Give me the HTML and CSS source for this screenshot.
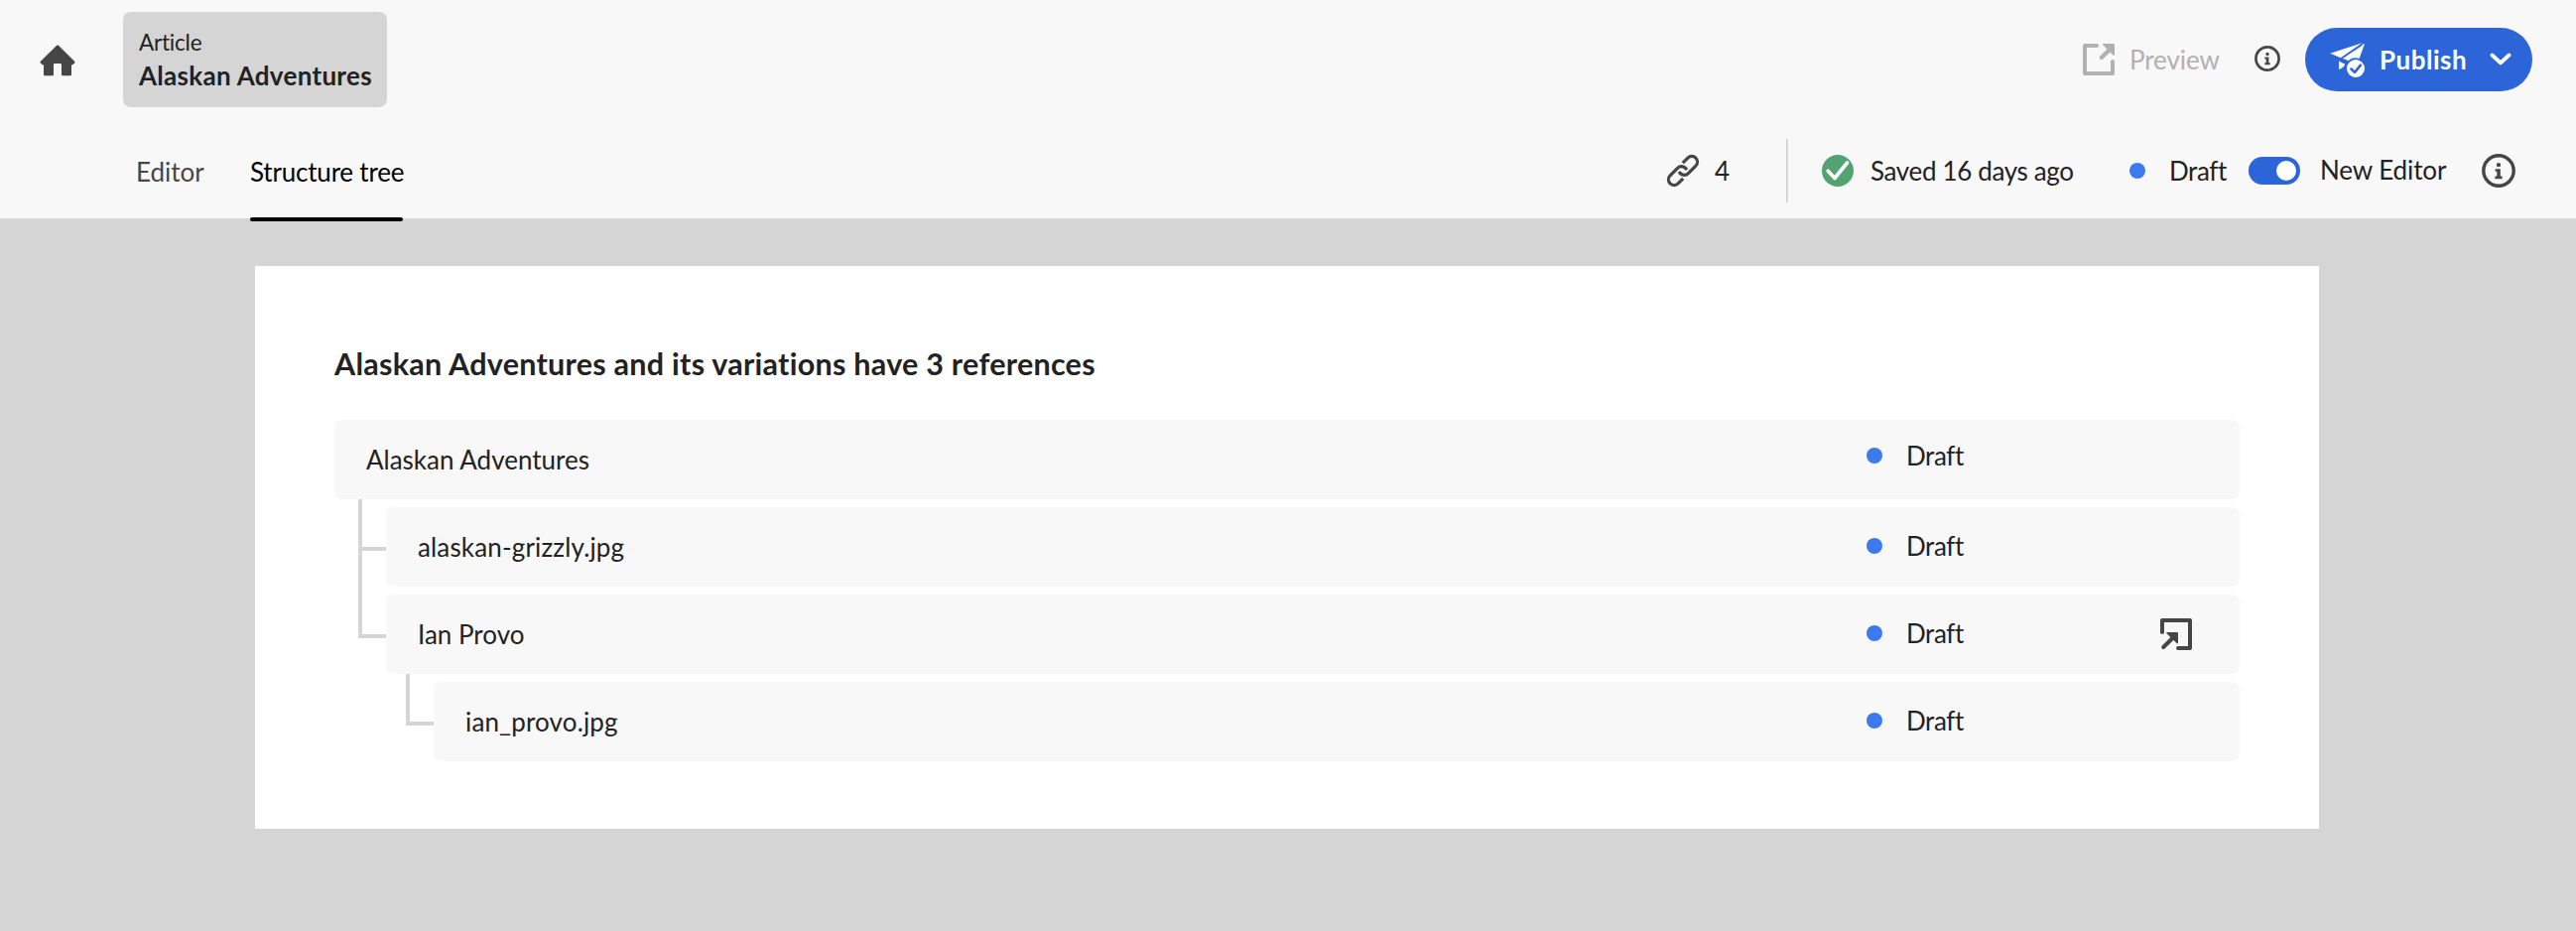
FILE: index.html
```html
<!DOCTYPE html>
<html lang="en">
<head>
<meta charset="utf-8">
<title>Alaskan Adventures</title>
<link rel="stylesheet" href="styles.css">
</head>
<body>
<svg class="defs" aria-hidden="true">
  <symbol id="info" viewBox="0 0 34 34">
    <circle cx="17" cy="17" r="15.2" fill="none" stroke="currentColor" stroke-width="3.4"/>
    <circle cx="17" cy="11.1" r="2.2" fill="currentColor"/>
    <path d="M13.6 15.2h5.2v7.4h1.8v2.6h-7.2v-2.6h1.9v-4.8h-1.7z" fill="currentColor"/>
  </symbol>
</svg>
<header class="header">
  <div class="topbar">
    <svg class="icon home" viewBox="0 0 36 36"><path fill="currentColor" d="M17.2 2.8a1.2 1.2 0 0 1 1.7 0L35.3 19c.6.6.4 1-.3 1.6l-1.1 1.2c-.5.5-1.1.8-1.9.8V32a1.2 1.2 0 0 1-1.2 1.2h-7.6A1.2 1.2 0 0 1 22 32V22.2a1.2 1.2 0 0 0-1.2-1.2h-5.6a1.2 1.2 0 0 0-1.2 1.2V32a1.2 1.2 0 0 1-1.2 1.2H5.2A1.2 1.2 0 0 1 4 32v-9.4c-.8 0-1.4-.3-1.9-.8L1 20.600C.3 20 .1 19.600.7 19z"/></svg>
    <div class="article">
      <span class="article-type">Article</span>
      <span class="article-name">Alaskan Adventures</span>
    </div>
    <div class="actions">
      <svg class="icon preview-icon" viewBox="0 0 36 36"><path d="M16 4H4v28h28V20" fill="none" stroke="currentColor" stroke-width="4" stroke-linecap="round" stroke-linejoin="round"/><path d="M22.800 2H33a1 1 0 0 1 1 1v10.200c0 .8-.8 1-1.300.5L22.400 3.400c-.6-.6-.3-1.400.4-1.400z" fill="currentColor"/><path d="M30 7l-9.200 9" stroke="currentColor" stroke-width="4.200" stroke-linecap="round"/></svg>
      <span class="preview">Preview</span>
      <svg class="info-small"><use href="#info"/></svg>
      <button class="publish">
        <svg class="icon" viewBox="0 0 36 36"><g fill="currentColor"><path d="M.3 11.800L32.500 1.300 10.800 16.200z"/><path d="M34.900 2.500L29.600 17c-4.500-1.700-8.300-.6-11 2.300l-1.900-.9L34.100 2z"/><path d="M12.800 16.900L31.500 4.500 17.600 18.600z"/><path d="M9.100 19.500l6 3.200c-.5 1-.8 1.700-1 2.200l-3.600 2.700c-.9.600-1.400.3-1.400-.6z"/><circle cx="26" cy="27" r="9"/></g><path d="M21.400 27.400l3.500 3.500 6-7.200" fill="none" stroke="#2c65d8" stroke-width="2.600" stroke-linecap="round" stroke-linejoin="round"/></svg>
        <span class="publish-label">Publish</span>
        <svg class="chevron" viewBox="0 0 22 14"><path d="M2.600 2.600L11 10.400l8.400-7.800" fill="none" stroke="currentColor" stroke-width="4" stroke-linecap="round" stroke-linejoin="round"/></svg>
      </button>
    </div>
  </div>
  <div class="subbar">
    <nav class="tabs">
      <a class="tab">Editor</a>
      <a class="tab tab-active">Structure tree</a>
    </nav>
    <div class="info-bar">
      <svg class="icon link-icon" viewBox="0 0 36 36"><g fill="none" stroke="currentColor" stroke-width="3.200"><path d="M17.800 10.200l5.100-5.100a5.600 5.600 0 0 1 8 8l-7.500 7.500a5.600 5.600 0 0 1-9.200-1.800"/><path transform="rotate(180 18 18)" d="M17.800 10.200l5.100-5.100a5.600 5.600 0 0 1 8 8l-7.500 7.500a5.600 5.600 0 0 1-9.200-1.800"/></g></svg>
      <span class="count">4</span>
      <span class="divider"></span>
      <svg class="check" viewBox="0 0 32 32"><circle cx="16" cy="16" r="16" fill="#52a371"/><path d="M6.200 16.200l6.800 7.300L25.500 8" fill="none" stroke="#f8f8f8" stroke-width="3.800" stroke-linecap="round" stroke-linejoin="round"/></svg>
      <span class="saved">Saved 16 days ago</span>
      <span class="dot"></span>
      <span class="draft">Draft</span>
      <span class="toggle"><span class="knob"></span></span>
      <span class="new-editor">New Editor</span>
      <svg class="info-large"><use href="#info"/></svg>
    </div>
  </div>
</header>
<main class="card">
  <h1 class="title">Alaskan Adventures and its variations have 3 references</h1>
  <div class="tree">
    <div class="row row-root"><span>Alaskan Adventures</span><div class="status"><span class="dot"></span><span class="draft">Draft</span></div></div>
    <div class="branch">
      <div class="rail"><i class="elbow"></i><i class="elbow elbow-next"></i></div>
      <div class="rows">
        <div class="row"><span class="file">alaskan-grizzly.jpg</span><div class="status"><span class="dot"></span><span class="draft">Draft</span></div></div>
        <div class="row"><span>Ian Provo</span><div class="status"><span class="dot"></span><span class="draft">Draft</span><svg class="icon goto" viewBox="0 0 36 36"><path d="M4 16V4h28v28H20" fill="none" stroke="currentColor" stroke-width="4" stroke-linecap="round" stroke-linejoin="round"/><path d="M9 16h10a1 1 0 0 1 1 1v9.800c0 .8-.8 1-1.300.5L8.500 17.300C8 16.800 8.200 16 9 16z" fill="currentColor"/><path d="M16 20.500L5.200 31" stroke="currentColor" stroke-width="4" stroke-linecap="round"/></svg></div></div>
        <div class="branch">
          <div class="rail rail-inner"><i class="elbow"></i></div>
          <div class="rows">
            <div class="row"><span class="file">ian_provo.jpg</span><div class="status"><span class="dot"></span><span class="draft">Draft</span></div></div>
          </div>
        </div>
      </div>
    </div>
  </div>
</main>
</body>
</html>
```
FILE: styles.css
```css
* { box-sizing: border-box; }
body {
  margin: 0;
  min-height: 938px;
  background: #d5d5d5;
  color: #222;
  font: 26px/36px Lato, "Noto Sans", sans-serif;
  white-space: nowrap;
}
.defs { display: none; }
svg { display: block; flex: none; }
.icon { width: 36px; height: 36px; color: #464646; }

.header { height: 220px; background: #f8f8f8; }
.topbar { display: flex; align-items: center; height: 120px; padding: 0 44px 0 40px; }
.home { margin-top: 2px; }
.article {
  display: flex;
  flex-direction: column;
  width: 266px;
  height: 96px;
  margin-left: 48px;
  padding: 14px 0 0 16px;
  border-radius: 8px;
  background: #d5d5d5;
}
.article-type { font-size: 22.5px; line-height: 34px; letter-spacing: -0.2px; }
.article-name { font-weight: 700; letter-spacing: 0.3px; margin-top: -2px; }
.actions { display: flex; align-items: center; margin-left: auto; }
.preview-icon { color: #b1b1b1; }
.preview { width: 126px; margin-left: 13px; color: #b1b1b1; letter-spacing: -0.1px; }
.info-small { width: 26px; height: 26px; margin: 0 25px 2px 0; color: #464646; }
.publish {
  display: flex;
  align-items: center;
  width: 229px;
  height: 64px;
  padding: 0 21px 0 25px;
  border: 0;
  border-radius: 32px;
  background: #2c65d8;
  color: #fff;
  font: inherit;
}
.publish .icon { color: #fff; }
.publish-label { width: 111px; margin-left: 14px; text-align: left; font-weight: 700; letter-spacing: 0.5px; }
.chevron { width: 22px; height: 14px; margin-left: auto; }

.subbar { display: flex; height: 100px; padding: 0 61px 0 137px; }
.tabs { display: flex; gap: 46px; }
.tab { width: 69px; height: 103px; padding-top: 35px; color: #464646; }
.tab-active { width: 154px; color: #000; letter-spacing: -0.2px; position: relative; }
.tab-active::after {
  content: "";
  position: absolute;
  left: 0;
  right: 0;
  bottom: 0;
  height: 4px;
  border-radius: 2px;
  background: #000;
}
.info-bar { display: flex; align-items: center; height: 104px; margin-left: auto; }
.link-icon { margin-right: 14px; }
.count { width: 72px; }
.divider { width: 2px; height: 64px; background: #d5d5d5; }
.check { width: 32px; height: 32px; margin-left: 34px; }
.saved { width: 278px; padding-left: 17px; letter-spacing: -0.35px; }
.dot { flex: none; width: 16px; height: 16px; border-radius: 50%; background: #3d7aee; }
.draft { width: 80px; margin-left: 24px; letter-spacing: -0.4px; }
.toggle { display: flex; justify-content: flex-end; width: 52px; height: 28px; padding: 4px; border-radius: 14px; background: #2c65d8; }
.knob { width: 20px; height: 20px; border-radius: 50%; background: #fff; }
.new-editor { width: 163px; margin-left: 20px; padding-bottom: 2px; letter-spacing: -0.1px; }
.info-large { width: 34px; height: 34px; color: #464646; }

.card { width: 2080px; height: 567px; margin: 48px 0 0 257px; padding: 78px 80px; background: #fff; }
.title { margin: 0 0 37px; font-size: 30.5px; line-height: 40px; letter-spacing: 0.26px; }
.tree, .rows { display: flex; flex-direction: column; gap: 8px; }
.rows { flex: 1; }
.row {
  display: flex;
  align-items: center;
  justify-content: space-between;
  height: 80px;
  padding-left: 32px;
  border-radius: 8px;
  background: #f8f8f8;
}
.file { letter-spacing: 0.15px; }
.status { display: flex; align-items: center; width: 376px; margin-bottom: 2px; }
.row-root .status { margin-bottom: 8px; }
.goto { margin: 2px 0 0 174px; }
.branch { display: flex; }
.rail { display: flex; flex-direction: column; width: 52px; padding-left: 24px; margin-top: -8px; }
.rail-inner { width: 48px; padding-left: 20px; }
.elbow { height: 52px; border: solid #d5d5d5; border-width: 0 0 4px 4px; }
.elbow-next { height: 88px; }
```
